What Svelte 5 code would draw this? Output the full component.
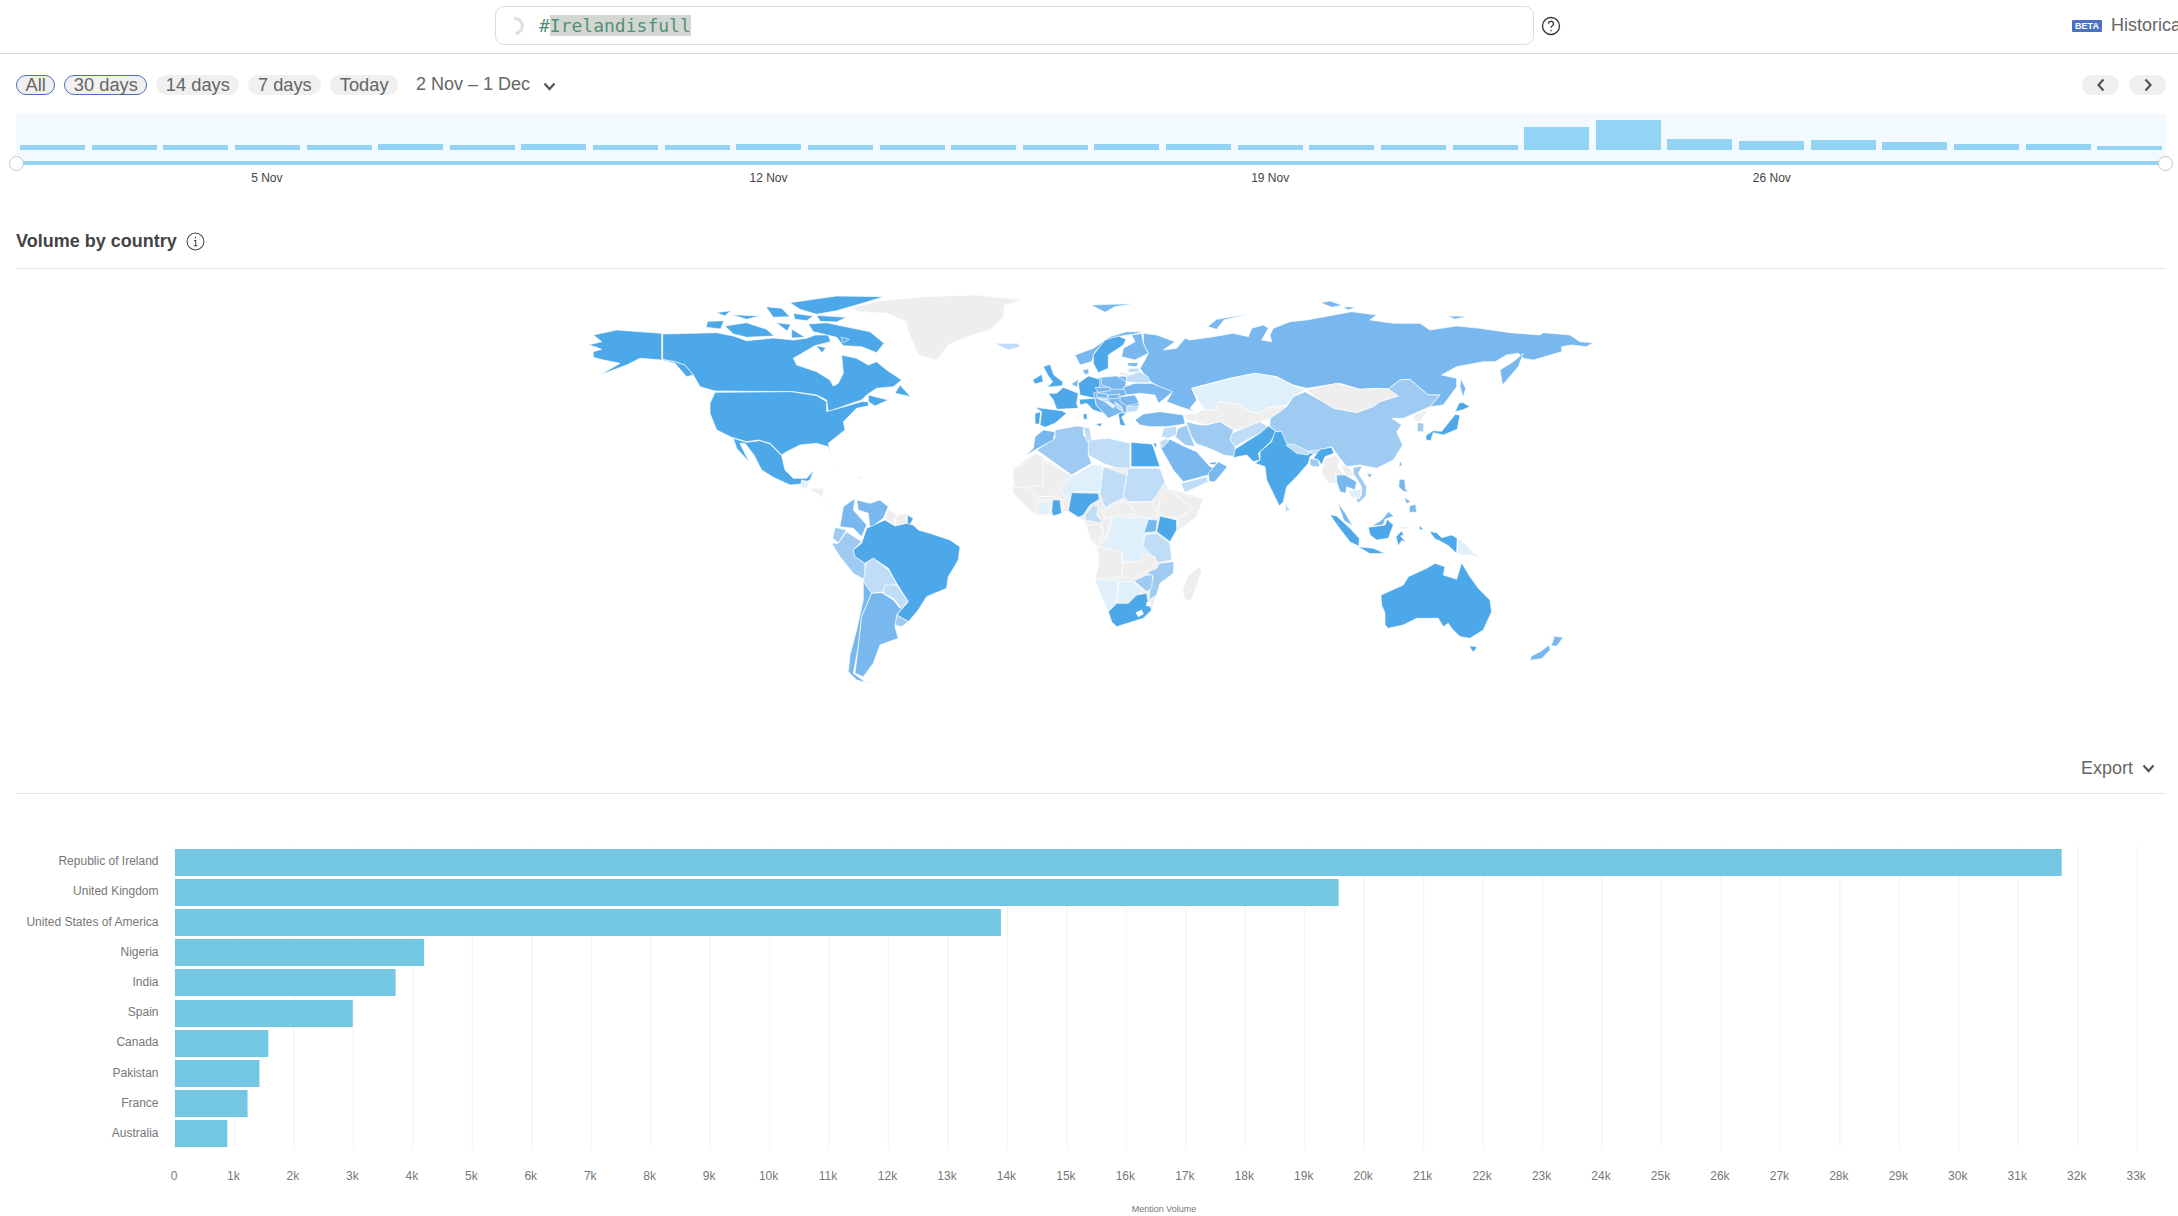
<script>
	const dark = '#4da8ea';
	const mid = '#78b8ee';
	const soft = '#9fcbf2';
	const pale = '#bfddf6';
	const faint = '#dff0fb';
	const none = '#eeeeee';

	const ranges = ['All', '30 days', '14 days', '7 days', 'Today'];
	const activeRanges = ['All', '30 days'];
	const dayBars = [5, 5, 5, 5, 5, 6, 5, 6, 5, 5, 6, 5, 5, 5, 5, 6, 6, 5, 5, 5, 5, 23, 30, 11, 9, 10, 8, 6, 6, 4];
	const dayLabels = ['5 Nov', '12 Nov', '19 Nov', '26 Nov'];

	const countries = [
		{ name: 'Republic of Ireland', value: 31730 },
		{ name: 'United Kingdom', value: 19570 },
		{ name: 'United States of America', value: 13890 },
		{ name: 'Nigeria', value: 4190 },
		{ name: 'India', value: 3710 },
		{ name: 'Spain', value: 2990 },
		{ name: 'Canada', value: 1570 },
		{ name: 'Pakistan', value: 1420 },
		{ name: 'France', value: 1220 },
		{ name: 'Australia', value: 880 }
	];

	const x0 = 175;
	const perK = 59.46;
	const ticks = Array.from({ length: 34 }, (_, i) => i);
	const barX = (value) => (value / 1000) * perK;

	// map shapes, traced per region; each group is drawn at a third of its size
	const regions = [
		{
			x: 560,
			y: 280,
			shapes: [
				[none, '870,85 960,62 1090,50 1250,45 1390,60 1335,75 1330,110 1290,150 1230,167 1170,192 1150,215 1130,240 1105,235 1075,225 1060,190 1045,155 1040,125 980,100 900,95'],
				[dark, '85,195 125,185 100,165 170,150 305,160 305,238 345,245 375,255 400,285 380,290 345,250 305,240 240,235 200,255 120,285 180,250 130,240 100,232 100,215 125,208 105,200'],
				[dark, '308,162 400,160 470,158 520,168 560,182 640,174 700,180 740,175 765,165 805,165 812,185 765,197 700,235 710,255 770,275 810,300 820,318 835,310 850,280 845,225 890,235 925,255 950,245 980,270 1025,300 1000,320 950,325 920,345 905,360 860,375 805,395 800,360 770,345 700,335 465,333 420,320 400,285 375,255 345,245 308,238'],
				[dark, '1005,340 1020,315 1052,350 1030,345'],
				[dark, '925,345 985,360 945,378 925,365'],
				[dark, '745,132 800,128 880,145 930,155 972,190 950,218 905,200 850,197 830,172 760,155'],
				[dark, '495,138 560,128 620,148 642,168 560,172 520,162'],
				[dark, '443,124 492,122 482,147 438,142'],
				[dark, '690,68 760,58 830,48 972,50 900,72 830,92 770,103 720,88'],
				[dark, '618,80 665,85 690,110 640,112'],
				[dark, '468,98 512,92 495,108'],
				[dark, '515,104 600,108 560,118'],
				[dark, '700,100 760,108 740,122 705,118'],
				[dark, '770,106 860,112 830,126 780,124'],
				[dark, '648,128 692,133 682,153'],
				[dark, '695,147 735,172 695,174'],
				[dark, '768,197 798,203 786,218'],
				[dark, '843,172 868,178 850,188'],
				[dark, '465,337 695,335 770,347 800,365 800,395 860,378 905,365 925,365 925,378 890,385 850,425 855,450 805,490 815,530 805,500 770,490 720,495 680,515 665,525 630,490 595,480 560,485 515,472 470,450 450,400 450,370'],
				[dark, '520,475 560,487 600,482 630,492 665,527 675,570 700,595 740,595 762,570 750,600 725,612 690,615 640,592 605,570 582,525 555,490 540,490 568,547 530,505'],
				[faint, '725,600 745,605 742,627 722,622'],
				[none, '745,625 790,625 790,655 770,640'],
				[faint, '785,660 815,680 800,675'],
				[faint, '805,555 865,580 835,570'],
				[none, '895,588 920,595 895,597'],
				[mid, '885,655 880,690 920,735 905,770 880,745 840,740 850,680'],
				[mid, '890,660 930,670 960,660 985,680 970,715 930,745 925,700 895,690'],
				[none, '985,685 1010,705 1000,735 975,715'],
				[none, '1010,705 1040,700 1040,730 1005,735'],
				[dark, '1042,705 1060,715 1050,735 1042,730'],
				[soft, '825,742 860,750 835,788 818,775'],
				[soft, '860,755 905,785 880,810 885,830 915,850 915,900 880,880 840,830 815,790 835,790'],
				[dark, '920,745 975,720 1005,738 1040,730 1060,735 1075,750 1110,760 1170,780 1200,800 1195,840 1165,890 1160,925 1100,950 1075,990 1045,1025 1010,1005 1045,965 1010,910 985,865 940,835 915,850 885,830 880,810 905,790'],
				[pale, '918,850 940,835 985,870 1010,910 975,935 935,940 910,905'],
				[pale, '975,915 1010,915 1045,965 1025,985 1000,955 970,940'],
				[soft, '1010,1005 1045,1025 1025,1040 1005,1035'],
				[mid, '910,905 935,940 905,1010 895,1100 880,1180 915,1205 945,1215 890,1200 865,1175 870,1125 890,1050 910,960'],
				[mid, '935,940 965,938 1000,960 1020,985 1040,968 1010,1005 1005,1040 1015,1075 960,1095 940,1150 910,1190 885,1180 895,1100 905,1010'],
				[pale, '1303,190 1375,190 1380,200 1345,210']
			]
		},
		{
			x: 1180,
			y: 290,
			shapes: [
				[mid, '-110,130 -70,135 -15,155 -50,180 -10,175 15,145 30,150 100,140 160,130 205,140 215,115 250,105 265,115 245,150 275,155 270,135 280,115 330,95 380,90 515,65 590,75 570,90 640,100 720,100 750,120 830,108 900,115 990,128 1080,135 1090,128 1170,135 1200,155 1240,158 1220,170 1175,165 1145,170 1145,185 1060,210 1030,205 1015,190 980,195 945,215 910,215 830,230 785,255 830,265 830,290 790,345 750,350 780,315 745,315 715,290 690,268 660,270 625,297 590,295 540,298 480,280 380,295 340,285 290,260 225,250 150,265 90,280 35,295 50,330 30,355 45,365 0,350 -40,335 -25,310 -80,280 -95,270 -120,235 -105,210 -95,190 -110,160'],
				[mid, '960,240 1000,215 1030,190 1015,230 968,285'],
				[mid, '843,266 857,295 850,322 840,290'],
				[mid, '422,38 450,33 487,46 455,52'],
				[mid, '488,50 527,51 505,60'],
				[mid, '803,78 862,79 825,88'],
				[dark, '838,338 850,338 870,350 847,360 825,365'],
				[dark, '826,373 840,376 832,418 790,435 760,428 752,452 738,450 738,436 760,422 785,424'],
				[faint, '35,295 90,282 150,265 225,250 290,260 345,290 375,298 340,320 320,345 260,355 240,370 210,365 180,345 115,335 110,360 75,360 55,330'],
				[none, '380,300 420,290 470,280 540,298 590,295 625,297 655,318 600,335 580,350 530,368 460,355 420,330'],
				[soft, '270,385 320,350 340,320 375,305 420,330 460,355 530,368 580,350 600,335 655,318 625,297 660,270 690,268 715,290 745,315 780,315 750,350 705,370 670,385 635,385 665,405 650,425 668,465 640,510 590,535 540,525 500,530 480,505 455,470 420,480 385,490 320,460 310,440 270,410'],
				[none, '705,372 745,358 720,395 700,390'],
				[soft, '712,398 732,400 730,425 712,425'],
				[none, '45,370 70,360 110,360 115,335 180,345 210,365 240,370 260,355 320,345 305,360 270,385 240,395 190,415 160,420 120,395 80,405 45,395'],
				[pale, '155,430 190,415 240,395 265,410 240,430 200,450 165,470 150,450'],
				[soft, '18,395 60,405 80,405 120,395 160,420 150,450 165,470 165,500 130,495 100,480 75,470 50,462 35,440'],
				[dark, '165,478 200,455 240,430 265,408 290,425 272,455 235,490 240,510 220,515 200,495 160,503'],
				[dark, '285,425 305,425 320,460 385,490 420,480 390,500 385,520 350,560 320,590 310,635 298,648 260,570 255,530 225,520 240,510 240,485 275,455'],
				[pale, '318,465 340,462 388,485 385,495 350,490'],
				[pale, '390,482 420,480 415,493 392,490'],
				[dark, '420,478 455,472 462,490 435,500 425,525 415,510 400,505'],
				[soft, '390,505 415,510 420,530 400,530 390,525'],
				[none, '435,505 465,495 480,505 475,530 495,560 465,555 470,580 445,580 425,545'],
				[none, '480,520 510,535 530,565 497,555'],
				[mid, '470,555 495,555 530,575 525,600 500,590 497,610 480,605 470,575'],
				[soft, '520,532 548,528 535,550 560,590 558,618 535,640 528,628 545,615 545,590 520,550'],
				[faint, '505,600 545,600 540,625 515,625'],
				[mid, '560,553 577,550 570,564'],
				[mid, '660,513 667,525 657,530'],
				[mid, '658,568 674,568 677,598 687,606 670,604 656,590'],
				[mid, '673,622 692,634 680,642'],
				[mid, '688,648 707,643 710,667 688,667'],
				[pale, '316,640 330,660 316,667']
			]
		},
		{
			x: 1020,
			y: 300,
			shapes: [
				// fills the cracks between the small european countries
				[mid, '175,250 243,232 320,228 320,285 300,290 358,310 350,335 300,340 265,355 228,315 225,295'],
				[mid, '213,15 270,13 342,11 285,20 255,37'],
				[mid, '563,80 590,58 692,41 612,60 590,88'],
				[dark, '70,200 90,193 102,225 128,245 128,257 82,262 98,245 83,225'],
				[dark, '38,240 65,223 70,245 45,252'],
				[mid, '165,165 220,145 270,110 320,95 370,95 340,103 290,110 255,125 225,155 215,185 180,195'],
				[dark, '220,165 255,120 295,108 318,118 310,135 265,165 265,205 235,218 220,190'],
				[mid, '335,105 365,100 370,130 385,160 345,180 305,170 310,145 345,125'],
				[mid, '345,360 370,342 420,335 490,345 495,372 440,380 390,380 360,375'],
				[none, '490,345 525,340 530,365 500,360'],
				[soft, '475,385 500,375 525,440 495,435 465,410'],
				[pale, '430,385 470,378 470,405 445,415 425,410'],
				[mid, '420,440 450,418 495,440 530,455 570,500 590,505 565,525 490,545 460,510'],
				[pale, '483,550 560,530 565,545 495,578'],
				[mid, '565,520 595,485 622,500 585,545 568,545'],
				[dark, '562,490 590,485 585,495'],
				[dark, '333,427 395,432 400,440 420,500 333,500'],
				[pale, '205,420 265,415 330,430 330,520 250,490 205,465'],
				[soft, '50,450 105,415 105,390 170,378 190,380 190,405 205,420 205,465 215,490 155,525'],
				[pale, '190,380 210,385 215,420 200,425'],
				[mid, '-20,504 0,480 40,445 45,410 70,390 105,395 100,420 50,447 10,470'],
				[dark, '45,322 125,332 140,340 105,370 75,382 60,375 65,335'],
				[dark, '45,340 62,335 58,372 45,372'],
				[dark, '85,280 110,280 130,262 175,280 170,310 175,325 110,328 100,300'],
				[dark, '175,250 205,228 240,238 238,272 220,280 225,295 180,285'],
				[mid, '153,252 176,238 172,262'],
				[mid, '188,210 206,206 206,221 194,224'],
				[dark, '178,298 225,295 228,315 265,355 250,340 220,330 200,310 180,315'],
				[dark, '190,341 201,341 201,358 190,358'],
				[dark, '226,371 248,369 240,380'],
				[mid, '243,232 290,228 318,245 315,268 280,268 245,255'],
				[mid, '225,262 270,262 272,272 235,277'],
				[mid, '232,278 262,282 262,295 230,292'],
				[mid, '265,285 300,282 295,295 265,297'],
				[pale, '232,295 262,298 285,320 255,305'],
				[mid, '300,290 345,285 358,310 320,318 300,305'],
				[mid, '310,262 345,250 395,250 425,262 458,275 435,295 415,310 405,285 360,280 320,285'],
				[pale, '320,228 360,215 385,230 390,248 350,248 320,245'],
				[pale, '325,205 355,205 358,215 325,218'],
				[mid, '322,188 355,188 350,200 325,198'],
				[none, '300,213 330,222 320,230 300,225'],
				[pale, '320,320 358,318 350,335 320,335'],
				[pale, '285,305 305,320 310,335 292,325'],
				[faint, '255,305 285,315 280,325'],
				[dark, '295,340 320,338 305,352 318,378 300,375'],
				[dark, '398,430 410,430 408,445'],
				[pale, '418,425 440,415 445,425 425,445']
			]
		},
		{
			x: 1000,
			y: 440,
			shapes: [
				// grey land below africa, the coloured countries sit on top
				[none, '40,85 105,40 215,105 310,80 385,85 480,85 495,125 505,145 610,175 590,230 530,275 510,305 515,360 522,365 520,400 480,430 470,465 455,510 430,535 350,560 335,545 305,470 285,415 298,370 290,320 270,300 255,245 205,212 160,228 110,225 40,160'],
				[none, '40,85 75,70 105,40 130,50 130,138 85,140 50,150 40,130'],
				[none, '130,65 215,105 210,140 180,145 150,170 120,170 85,140 130,138'],
				[none, '35,140 80,145 110,170 100,180 110,225 95,215 60,180 40,160'],
				[none, '110,170 150,170 185,175 180,185 190,215 155,180 110,180'],
				[faint, '112,188 150,185 150,222 118,225'],
				[dark, '158,180 180,180 185,220 160,228 155,215'],
				[none, '188,180 205,170 205,210 192,215'],
				[faint, '185,145 215,110 275,75 305,75 315,130 300,155 225,155 205,175 190,165'],
				[dark, '215,158 295,160 298,178 270,195 250,225 235,232 205,212'],
				[pale, '310,80 380,105 375,140 370,175 335,190 315,205 300,160'],
				[pale, '385,85 480,85 495,125 470,165 455,185 385,185 370,170'],
				[none, '385,187 455,185 475,225 440,235 410,225'],
				[none, '305,215 345,190 380,185 410,225 345,225 315,235'],
				[pale, '280,195 295,200 290,225 310,250 255,240 255,225'],
				[none, '480,170 505,145 575,210 530,235 475,225'],
				[none, '505,145 570,170 610,175 590,230 530,275 535,235 580,205'],
				[none, '260,255 300,255 310,285 290,305 270,300'],
				[none, '305,240 335,230 320,290 295,310 310,285'],
				[faint, '340,230 440,235 445,265 430,310 465,350 430,345 425,365 370,365 365,335 320,330 290,320 320,300'],
				[mid, '445,238 472,240 468,275 432,278'],
				[dark, '480,228 530,240 530,270 510,305 470,275'],
				[pale, '435,285 470,280 510,310 515,360 475,368 445,335 430,318'],
				[none, '290,320 320,325 365,335 368,370 365,410 285,415 298,370'],
				[none, '370,370 420,365 430,340 465,350 470,370 440,395 400,418 365,410'],
				[soft, '478,370 522,365 520,400 480,430 470,465 447,480 450,445 460,410 440,398 470,385'],
				[soft, '402,422 440,405 458,405 455,445 440,455'],
				[faint, '285,420 355,420 350,490 325,515 305,470'],
				[faint, '358,425 400,425 430,455 410,465 385,490 350,490'],
				[dark, '325,515 350,490 385,490 410,465 440,460 445,490 455,510 430,535 350,560 335,545'],
				['#ffffff', '408,518 425,510 430,522 415,530'],
				['#ffffff', '440,487 452,487 450,498 440,498'],
				[none, '600,380 605,395 575,480 555,480 548,450 565,405']
			]
		},
		{
			x: 1270,
			y: 470,
			shapes: [
				[dark, '333,375 400,345 415,320 470,295 495,280 525,290 520,315 560,328 575,278 600,320 625,355 660,390 665,425 640,480 600,505 570,500 545,475 535,460 520,470 505,445 440,445 400,465 355,475 345,465 345,430 335,405'],
				[dark, '597,528 622,530 610,547'],
				[mid, '838,476 847,498 880,502 860,529 843,527 852,505'],
				[mid, '838,525 841,540 815,566 780,571 785,558 810,545'],
				[dark, '180,134 200,138 240,175 268,205 267,229 240,216 205,170'],
				[dark, '264,230 310,235 345,250 300,251'],
				[dark, '295,172 345,165 352,148 370,165 355,205 320,210 300,195'],
				[mid, '305,168 335,150 355,125 372,138 345,148 340,165'],
				[mid, '203,98 225,128 248,167 222,152'],
				[dark, '378,200 395,183 402,195 392,198 407,215 395,212 385,227'],
				[dark, '478,184 500,188 515,203 545,195 562,205 560,250 535,227 510,213 495,207'],
				[faint, '562,205 590,225 610,250 637,267 600,254 580,257 562,250'],
				[dark, '448,166 460,178 449,180'],
				[faint, '386,170 427,170 400,178']
			]
		}
	];
</script>

<div class="page">
	<header class="topbar">
		<div class="search">
			<svg class="spinner" width="18" height="20" viewBox="0 0 18 20">
				<path d="M6 2.500a7.500 7.500 0 0 1 1.500 15" />
			</svg>
			<span class="query">#<span class="selected">Irelandisfull</span></span>
		</div>
		<svg class="help" width="20" height="20" viewBox="0 0 20 20">
			<circle cx="10" cy="10" r="8.500" />
			<path d="M7.500 7.800a2.500 2.500 0 1 1 3.600 2.200c-.8.400-1.100.900-1.100 1.800" />
			<path d="M10 14v1.200" />
		</svg>
		<div class="historical">
			<span class="beta">BETA</span>
			<span>Historical</span>
		</div>
	</header>

	<main class="content">
		<div class="controls">
			{#each ranges as range}
				<button class="chip" class:active={activeRanges.includes(range)}>{range}</button>
			{/each}
			<button class="dates">
				2 Nov – 1 Dec
				<svg width="13" height="9" viewBox="0 0 13 9"><path d="M1.500 1.500l5 5.500 5-5.500" /></svg>
			</button>
			<div class="pager">
				<button class="nav" aria-label="Previous">
					<svg width="10" height="14" viewBox="0 0 10 14"><path d="M7.500 1.500l-5 5.500 5 5.500" /></svg>
				</button>
				<button class="nav" aria-label="Next">
					<svg width="10" height="14" viewBox="0 0 10 14"><path d="M2.500 1.500l5 5.500-5 5.500" /></svg>
				</button>
			</div>
		</div>

		<div class="range">
			<div class="bars">
				{#each dayBars as h}
					<div class="bar" style="height: {h}px"></div>
				{/each}
			</div>
			<div class="track">
				<span class="handle left"></span>
				<span class="handle right"></span>
			</div>
			<div class="days">
				{#each dayLabels as label}
					<span>{label}</span>
				{/each}
			</div>
		</div>

		<div class="section-head">
			<h2>Volume by country</h2>
			<svg class="info" width="19" height="19" viewBox="0 0 18 18">
				<circle cx="9" cy="9" r="8" />
				<path d="M7.500 8h1.700v5M7.300 13h3.600" />
				<path d="M9 4.500v1.500" />
			</svg>
		</div>

		<div class="map">
			<svg width="1100" height="476" viewBox="541 269 1100 476">
				{#each regions as region}
					<g transform="translate({region.x} {region.y}) scale(0.3333)">
						{#each region.shapes as [fill, points]}
							<polygon {fill} {points} />
						{/each}
					</g>
				{/each}
			</svg>
		</div>

		<div class="export-row">
			<button class="export">
				Export
				<svg width="13" height="9" viewBox="0 0 13 9"><path d="M1.500 1.500l5 5.500 5-5.500" /></svg>
			</button>
		</div>

		<svg class="chart" width="2150" height="422" viewBox="16 794 2150 422">
			{#each ticks as t}
				<line class="grid" x1={x0 + t * perK} x2={x0 + t * perK} y1="847" y2="1148" />
				<text class="tick" x={x0 - 1 + t * perK} y="1180">{t === 0 ? '0' : `${t}k`}</text>
			{/each}
			{#each countries as c, i}
				<rect class="value" x={x0} y={Math.round(849 + i * 30.1)} width={barX(c.value)} height="27" />
				<text class="category" x="158.500" y={Math.round(865.2 + i * 30.2)}>{c.name}</text>
			{/each}
			<text class="axis-title" x="1164" y="1212">Mention Volume</text>
		</svg>
	</main>
</div>

<style>
	:global(body) {
		margin: 0;
		background: #fff;
		overflow: hidden;
	}

	.page {
		width: 2178px;
		height: 1216px;
		overflow: hidden;
		font-family: 'Liberation Sans', Arial, sans-serif;
		color: #666;
	}

	button {
		font: inherit;
		color: inherit;
		border: none;
		background: none;
		padding: 0;
	}

	.topbar {
		display: flex;
		align-items: center;
		height: 51px;
		padding: 0 0 2px 495px;
		border-bottom: 1px solid #d9d9d9;
	}

	.search {
		display: flex;
		align-items: center;
		box-sizing: border-box;
		width: 1039px;
		height: 39px;
		padding-left: 12px;
		border: 1px solid #dcdcdc;
		border-radius: 9px;
	}

	.spinner {
		margin-right: 13px;
		fill: none;
		stroke: #dedede;
		stroke-width: 3;
	}

	.query {
		font: 18px/20px 'DejaVu Sans Mono', monospace;
		color: #4f9272;
	}

	.selected {
		background: #d4d6d4;
	}

	.help {
		margin: 0 0 0 7px;
		fill: none;
		stroke: #333;
		stroke-width: 1.300;
	}

	.historical {
		display: flex;
		align-items: center;
		gap: 9px;
		margin-left: auto;
		width: 106px;
		flex: none;
		white-space: nowrap;
		overflow: hidden;
		font-size: 18px;
	}

	.beta {
		background: #4a72c4;
		color: #fff;
		font-size: 9px;
		font-weight: bold;
		line-height: 12px;
		padding: 0 3px;
		border-radius: 1px;
		width: 24px;
		text-align: center;
		flex: none;
	}

	.content {
		padding: 0 12px 0 16px;
	}

	.controls {
		display: flex;
		align-items: center;
		gap: 9px;
		height: 20px;
		padding-top: 21px;
	}

	.chip {
		box-sizing: border-box;
		height: 20px;
		line-height: 18px;
		padding: 0 9.500px;
		background: #f0f0f0;
		border-radius: 10px;
		font-size: 18.300px;
	}

	.chip.active {
		border: 1.500px solid #4a6cc2;
		padding: 0 8.500px;
	}

	.dates,
	.export {
		display: flex;
		align-items: center;
		font-size: 18px;
		line-height: 20px;
	}

	.dates {
		gap: 13px;
		margin-left: 9px;
		margin-top: -2px;
	}

	.export {
		gap: 9px;
	}

	.dates svg,
	.export svg,
	.nav svg {
		fill: none;
		stroke: #555;
		stroke-width: 2.200;
	}

	.dates svg {
		margin-top: 4px;
	}

	.pager {
		display: flex;
		gap: 10px;
		margin-left: auto;
	}

	.nav {
		display: flex;
		align-items: center;
		justify-content: center;
		width: 37px;
		height: 20px;
		background: #f0f0f0;
		border-radius: 10px;
	}

	.range {
		margin-top: 19px;
	}

	.bars {
		display: flex;
		align-items: flex-end;
		gap: 6.600px;
		height: 36px;
		padding: 0 4px 11px;
		background: #f2faff;
	}

	.bar {
		flex: 1;
		background: #93d3f4;
	}

	.track {
		position: relative;
		height: 4px;
		background: #93d3f4;
	}

	.handle {
		position: absolute;
		top: -5px;
		box-sizing: border-box;
		width: 15px;
		height: 15px;
		background: #fff;
		border: 1px solid #c8c8c8;
		border-radius: 50%;
	}

	.handle.left {
		left: -7px;
	}

	.handle.right {
		right: -7px;
	}

	.days {
		display: flex;
		margin-top: 6px;
		font-size: 12px;
		line-height: 14px;
		color: #444;
	}

	.days span {
		width: calc(100% * 7 / 30);
		text-align: center;
	}

	.section-head {
		display: flex;
		align-items: center;
		gap: 9px;
		margin-top: 46px;
		padding-bottom: 17px;
		border-bottom: 1px solid #e6e6e6;
	}

	h2 {
		margin: 0;
		font-size: 18px;
		line-height: 20px;
		font-weight: bold;
		color: #444;
	}

	.info {
		fill: none;
		stroke: #444;
		stroke-width: 1;
	}

	.map {
		display: flex;
		justify-content: center;
		height: 476px;
	}

	.map polygon {
		stroke: #fff;
		stroke-width: 2;
		stroke-linejoin: round;
	}

	.export-row {
		display: flex;
		justify-content: flex-end;
		align-items: center;
		height: 46px;
		padding: 0 11px 2px 0;
		border-bottom: 1px solid #e6e6e6;
	}

	.chart {
		display: block;
	}

	.grid {
		stroke: #ececec;
		stroke-width: 1.500;
		stroke-dasharray: 1 1;
	}

	.value {
		fill: #74c7e3;
	}

	.category,
	.tick {
		font-size: 12px;
		fill: #777;
	}

	.category {
		text-anchor: end;
	}

	.tick {
		text-anchor: middle;
	}

	.axis-title {
		font-size: 9px;
		fill: #777;
		text-anchor: middle;
	}
</style>
